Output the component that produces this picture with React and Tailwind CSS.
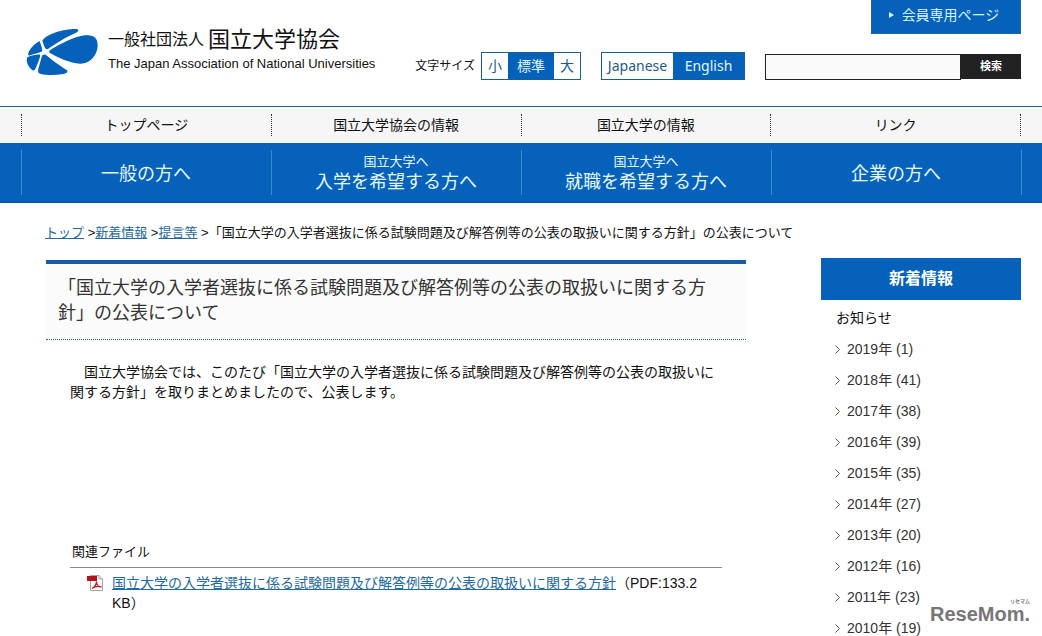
const primaryNav = ['トップページ', '国立大学協会の情報', '国立大学の情報', 'リンク'];

const audienceNav = [
  { title: '一般の方へ' },
  { lead: '国立大学へ', title: '入学を希望する方へ' },
  { lead: '国立大学へ', title: '就職を希望する方へ' },
  { title: '企業の方へ' },
];

const archives = [
  { year: 2019, count: 1 },
  { year: 2018, count: 41 },
  { year: 2017, count: 38 },
  { year: 2016, count: 39 },
  { year: 2015, count: 35 },
  { year: 2014, count: 27 },
  { year: 2013, count: 20 },
  { year: 2012, count: 16 },
  { year: 2011, count: 23 },
  { year: 2010, count: 19 },
];

function LogoMark() {
  return (
    <svg viewBox="18 24 216 144" className="w-[72px] h-12 shrink-0" fill="#0561ba" aria-hidden="true">
      <path d="M67 62C80 42 130 27 165 27C178 27 178 33 168 38C140 50 105 72 84 87C77 91 73 80 67 62Z" />
      <path d="M88 92C120 72 160 50 195 46C222 43 234 55 233 78C232 105 210 132 180 131C150 130 115 112 88 98Z" />
      <path d="M66 107C72 101 78 104 82 108C100 125 125 140 140 150C146 155 140 160 130 162C105 167 75 166 60 161C52 158 54 150 56 143Z" />
      <path d="M22 112C35 106 50 103 60 104C62 108 57 120 51 135C46 149 42 154 38 151C26 142 16 125 22 112Z" />
      <path d="M59 64C63 76 67 84 67 93C60 99 45 101 26 107C22 100 29 88 37 80C46 71 54 65 59 64Z" />
    </svg>
  );
}

function PdfIcon() {
  return (
    <svg viewBox="0 0 16 16" className="w-4 h-4 mt-[2px] shrink-0" aria-hidden="true">
      <path d="M3.5 .5H12L15.5 4V15.5H3.5Z" fill="#fff" stroke="#a9a0a0" />
      <path d="M12 .5V4H15.5" fill="#eee" stroke="#a9a0a0" />
      <path d="M0 1H10V6H0Z" fill="#b5121b" />
      <path
        d="M5 13.5C7.5 12.5 9.5 9 9.5 6.5C9.5 9.5 11.5 12 14.5 12C11 11 7.5 11.5 5 13.5Z"
        fill="none"
        stroke="#c4161c"
        strokeWidth="1.3"
      />
    </svg>
  );
}

function Header() {
  return (
    <header className="max-w-[1000px] mx-auto flex justify-between h-[106px]">
      <a href="#" className="flex items-start gap-[10px] pl-[5px] pt-7">
        <LogoMark />
        <span className="block">
          <span className="flex items-center gap-1 leading-6">
            <span className="text-base leading-6">一般社団法人</span>
            <span className="text-[22px] leading-6">国立大学協会</span>
          </span>
          <span className="block text-[13px] leading-6">The Japan Association of National Universities</span>
        </span>
      </a>

      <div className="flex flex-col items-end gap-[18px]">
        <a
          href="#"
          className="flex items-center justify-center gap-2 w-[150px] h-[34px] pr-1 pb-1 bg-[#0561ba] border border-t-0 border-[#1b6a9c] text-[#d5f3ff] text-sm"
        >
          <svg viewBox="0 0 5 6" className="w-[5px] h-[6px]" fill="currentColor" aria-hidden="true">
            <path d="M0 0L5 3L0 6Z" />
          </svg>
          会員専用ページ
        </a>

        <div className="flex items-end gap-5">
          <div className="flex items-center gap-[6px]">
            <span className="text-xs">文字サイズ</span>
            <div className="flex h-7 border border-[#1d5f8c] text-sm text-[#1d5a91]">
              <button type="button" className="w-[26px]">小</button>
              <button type="button" className="w-[46px] bg-[#0561ba] text-[#e0f6ff]">標準</button>
              <button type="button" className="w-[26px]">大</button>
            </div>
          </div>

          <div className="flex h-7 border border-[#1d5f8c] font-['Noto_Sans'] text-sm leading-[26px] text-center">
            <a href="#" className="w-[71px] text-[#1d5a91]">Japanese</a>
            <a href="#" className="w-[71px] bg-[#0561ba] text-[#e0f6ff]">English</a>
          </div>

          <form className="flex" onSubmit={(e) => e.preventDefault()}>
            <input
              type="text"
              aria-label="検索"
              className="w-[196px] h-[26px] px-2 text-sm bg-[#fafafa] border border-[#222] rounded-none outline-none"
            />
            <button type="submit" className="w-[60px] h-[25px] bg-[#222] text-white text-[11px] font-bold">
              検索
            </button>
          </form>
        </div>
      </div>
    </header>
  );
}

function Navigation() {
  return (
    <nav>
      <div className="bg-[#f6f6f6] border-t border-[#1f6a80]">
        <ul className="max-w-[1000px] mx-auto h-9 flex items-center">
          {primaryNav.map((label) => (
            <li key={label} className="flex-1 border-l border-dotted border-[#333] last:border-r">
              <a href="#" className="block text-center text-sm leading-[22px]">{label}</a>
            </li>
          ))}
        </ul>
      </div>
      <div className="bg-[#0561ba] border-b border-[#114c80] text-[#e6f8ff]">
        <ul className="max-w-[1001px] mx-auto h-[59px] flex items-center">
          {audienceNav.map((item) => (
            <li key={item.title} className="flex-1 h-[45px] border-l border-[#3e8bc9] last:border-r">
              <a href="#" className="h-full pt-[2px] flex flex-col items-center justify-center">
                {item.lead && <span className="text-[13px] leading-4">{item.lead}</span>}
                <span className="text-lg leading-6">{item.title}</span>
              </a>
            </li>
          ))}
        </ul>
      </div>
    </nav>
  );
}

function Breadcrumb() {
  return (
    <div className="pl-6 pt-5 text-[13px] leading-5">
      <a href="#" className="text-[#1f6a9e] underline">トップ</a> &gt;
      <a href="#" className="text-[#1f6a9e] underline">新着情報</a> &gt;
      <a href="#" className="text-[#1f6a9e] underline">提言等</a>
      {' >「国立大学の入学者選抜に係る試験問題及び解答例等の公表の取扱いに関する方針」の公表について'}
    </div>
  );
}

function Article() {
  return (
    <main className="flex-1 pt-[2px]">
      <h1 className="bg-[#fbfbfb] border-t-4 border-t-[#1a5ba8] pl-3 pr-8 pt-3 pb-[13px] text-lg leading-[25px] text-[#333]">
        「国立大学の入学者選抜に係る試験問題及び解答例等の公表の取扱いに関する方針」の公表について
      </h1>
      <div className="border-t border-dotted border-[#1f5f8f] px-6">
        <p className="pt-[22px] indent-[14px] text-sm leading-5">
          国立大学協会では、このたび「国立大学の入学者選抜に係る試験問題及び解答例等の公表の取扱いに関する方針」を取りまとめましたので、公表します。
        </p>
        <section className="mt-[140px]">
          <h2 className="pl-[2px] pb-[5px] border-b border-[#888] text-[13px] leading-5">関連ファイル</h2>
          <div className="flex gap-[9px] pl-[17px] pt-[5px]">
            <PdfIcon />
            <p className="text-sm leading-5">
              <a href="#" className="text-[#1f6a9e] underline">
                国立大学の入学者選抜に係る試験問題及び解答例等の公表の取扱いに関する方針
              </a>
              （PDF:133.2 KB）
            </p>
          </div>
        </section>
      </div>
    </main>
  );
}

function Sidebar() {
  return (
    <aside className="w-[200px] shrink-0">
      <h2 className="h-[42px] bg-[#0561ba] text-white text-base font-bold text-center leading-[42px]">新着情報</h2>
      <h3 className="pl-[15px] pt-[10px] text-sm leading-4">お知らせ</h3>
      <ul className="pl-[14px] pt-[15px] flex flex-col gap-[15px]">
        {archives.map(({ year, count }) => (
          <li key={year}>
            <a href="#" className="flex items-center gap-[7px] text-sm leading-4 text-[#333]">
              <svg viewBox="0 0 5 9" className="w-[5px] h-[9px]" fill="none" stroke="#555" aria-hidden="true">
                <path d="M.5 .5L4.5 4.5L.5 8.5" />
              </svg>
              {`${year}年 (${count})`}
            </a>
          </li>
        ))}
      </ul>
    </aside>
  );
}

function Watermark() {
  return (
    <div className="absolute right-3 bottom-3 flex flex-col items-end text-[#777] font-bold">
      <span className="text-[5px] leading-[5px]">リセマム</span>
      <span className="text-xl leading-5">ReseMom.</span>
    </div>
  );
}

export default function App() {
  return (
    <div className="relative bg-white text-[#111] font-['Liberation_Sans','Noto_Sans_CJK_JP',sans-serif]">
      <Header />
      <Navigation />
      <div className="max-w-[1000px] mx-auto">
        <Breadcrumb />
        <div className="flex gap-[75px] pl-[25px] pt-[15px]">
          <Article />
          <Sidebar />
        </div>
      </div>
      <Watermark />
    </div>
  );
}
